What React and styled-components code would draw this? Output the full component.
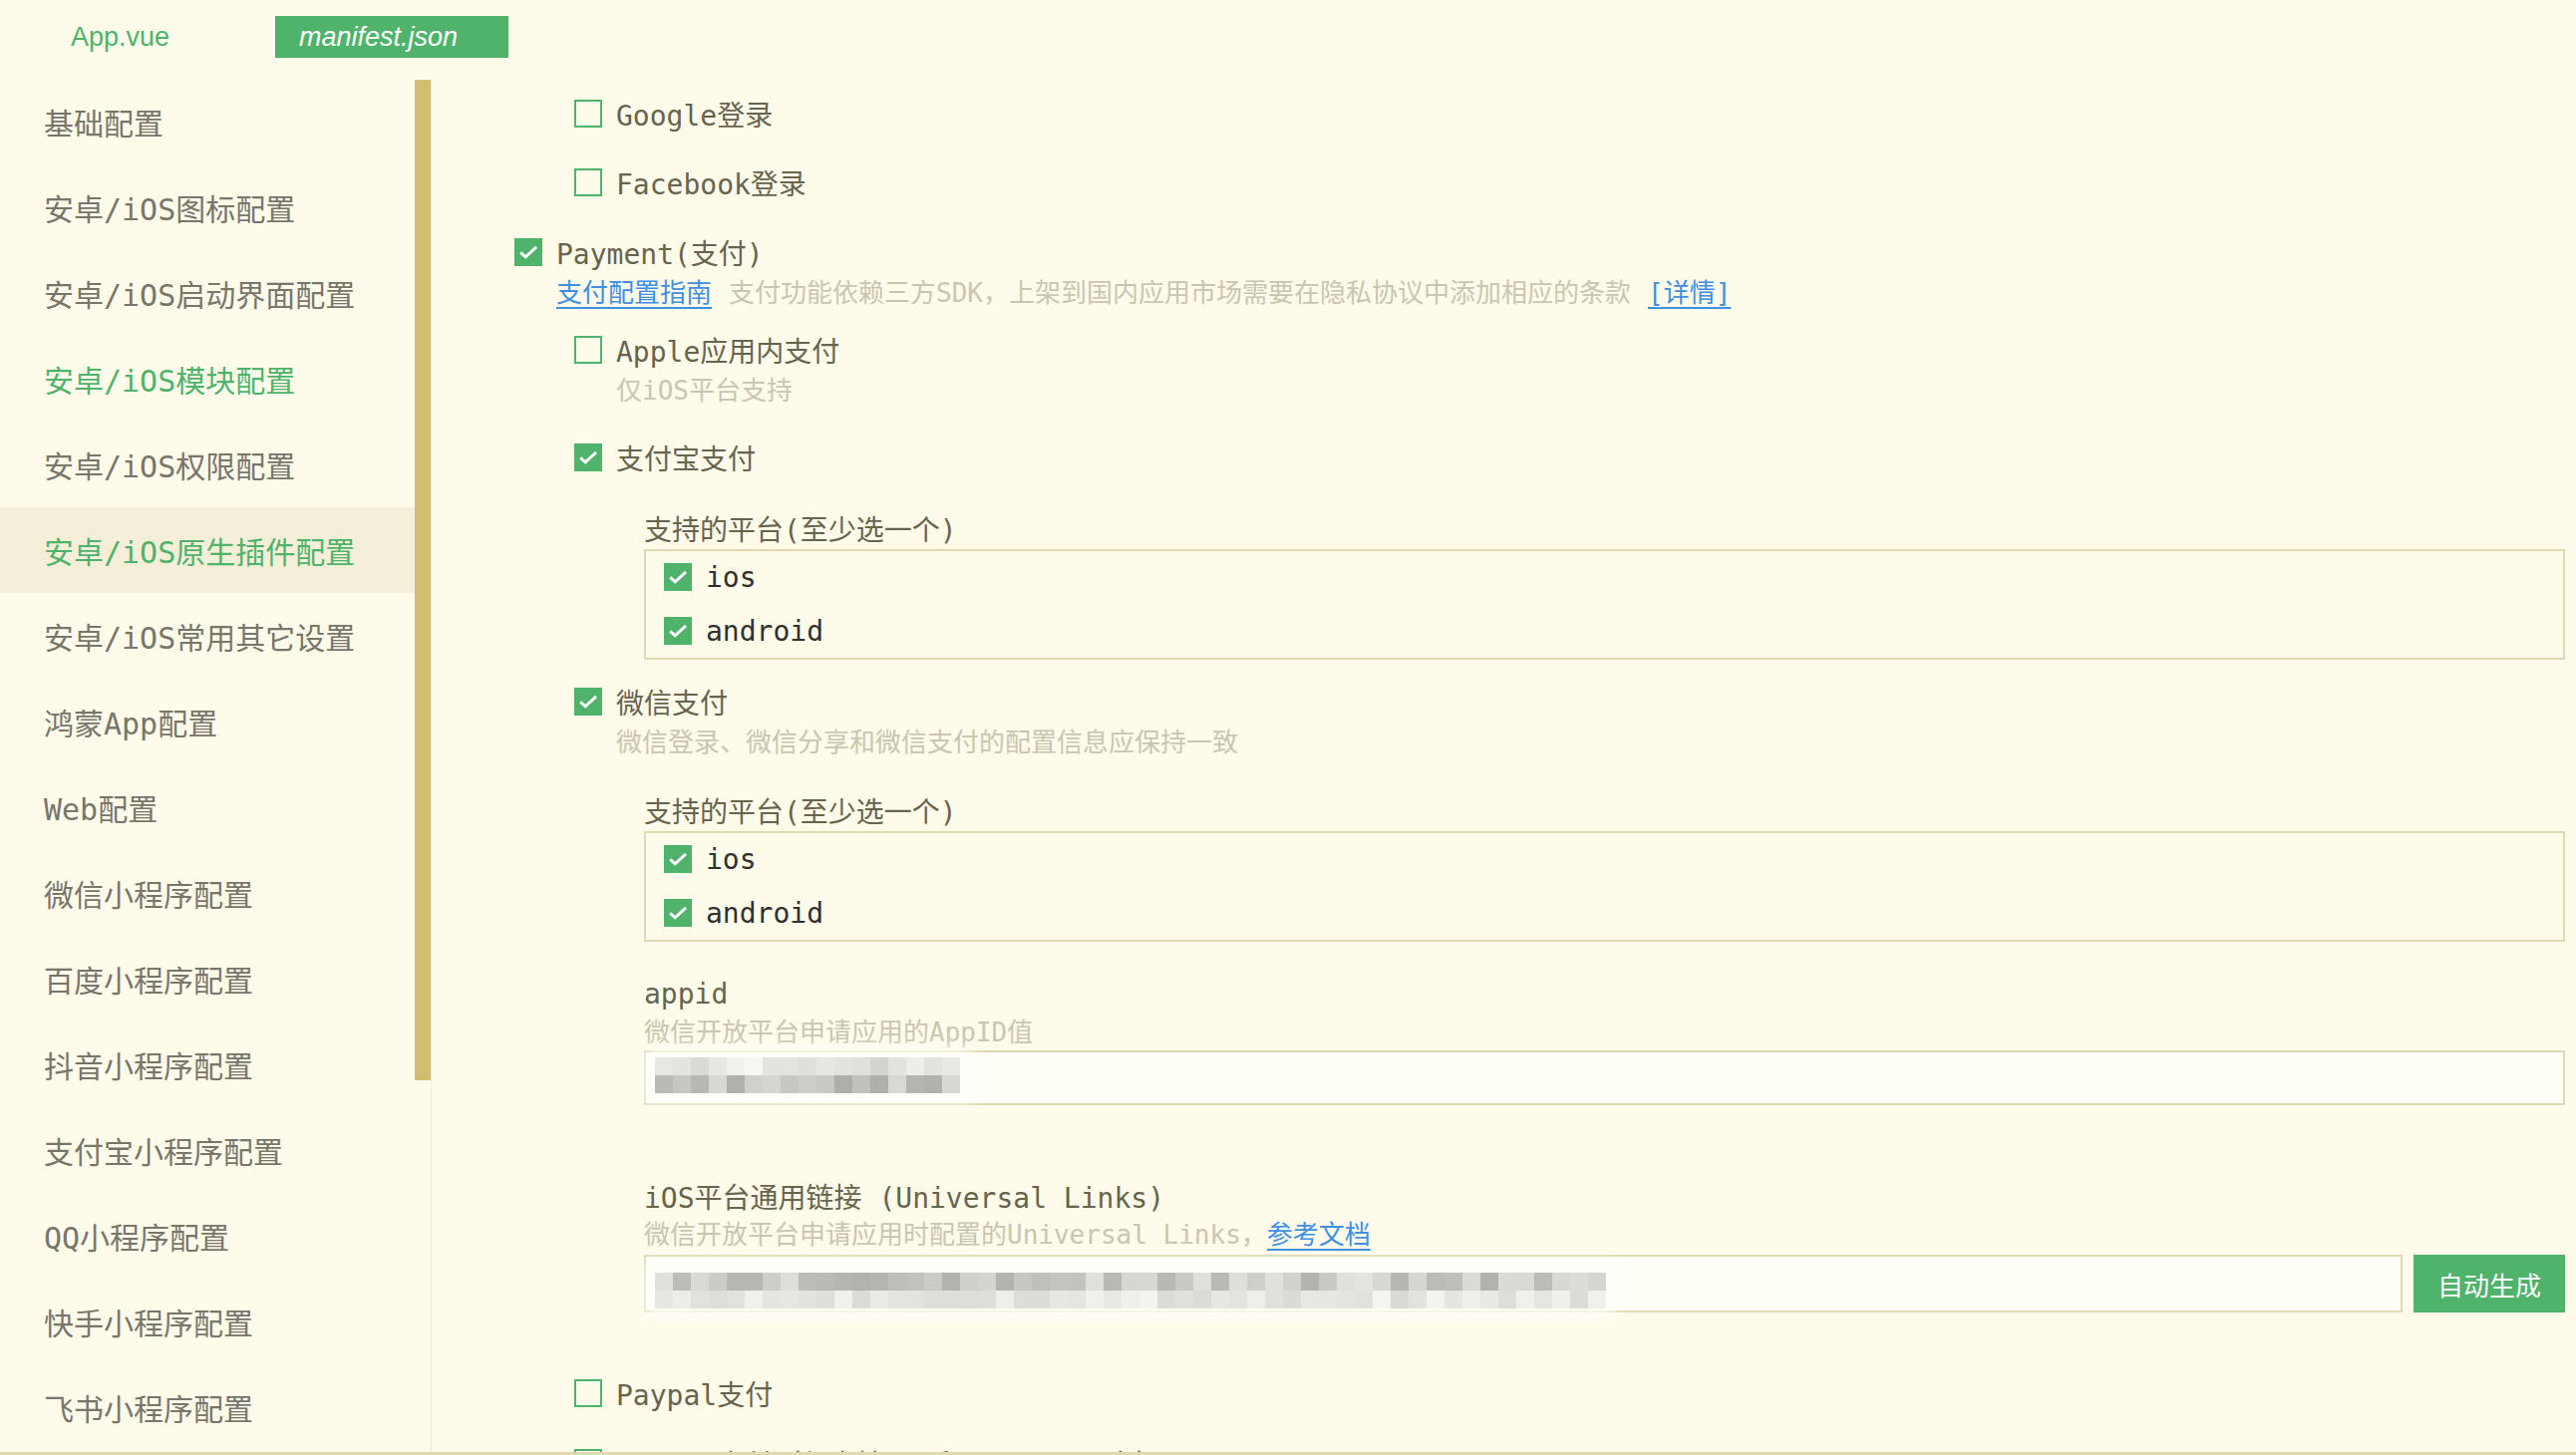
import React from "react";
import styled, { createGlobalStyle } from "styled-components";

const C = {
  bg: "#fefbea",
  navSelectedBg: "#f5efd9",
  green: "#4fb36b",
  thumb: "#d1be70",
  label: "#67634d",
  navText: "#78756a",
  strong: "#30302c",
  hint: "#c9c5b1",
  link: "#3f8fe2",
  border: "#e1d9b2",
  inputBg: "#fffef7",
  divider: "#f1ecd5",
};

const mono = `"DejaVu Sans Mono", "Noto Sans CJK SC", monospace`;
const sans = `"Liberation Sans", "Noto Sans CJK SC", sans-serif`;

const GlobalStyle = createGlobalStyle`
  html, body { margin: 0; padding: 0; background: ${C.bg}; }
  body { font-family: ${mono}; }
  * { box-sizing: border-box; }
`;

const Page = styled.div`
  height: 100vh;
  display: flex;
  flex-direction: column;
  overflow: hidden;
  background: ${C.bg};
`;

/* ---------- editor tabs ---------- */
const TabBar = styled.div`
  flex: none;
  height: 79px;
  display: flex;
  align-items: flex-start;
  padding: 16px 0 0 47px;
`;

const Tab = styled.div`
  width: ${(p) => p.$width}px;
  height: 42px;
  display: flex;
  align-items: center;
  padding-left: 24px;
  font-family: ${sans};
  font-size: 27px;
  font-style: ${(p) => (p.$active ? "italic" : "normal")};
  color: ${(p) => (p.$active ? "#ffffff" : C.green)};
  background: ${(p) => (p.$active ? C.green : "transparent")};
`;

/* ---------- body: nav + form ---------- */
const Body = styled.div`
  flex: 1;
  min-height: 0;
  display: flex;
  overflow: hidden;
  border-bottom: 3px solid ${C.border};
`;

const Sidebar = styled.aside`
  flex: none;
  display: flex;
  border-right: 1px solid ${C.divider};
`;

const NavList = styled.nav`
  width: 416px;
  display: flex;
  flex-direction: column;
  overflow: hidden;
`;

const NavItem = styled.div`
  flex: none;
  height: 86px;
  display: flex;
  align-items: center;
  padding-left: 44px;
  font-size: 30px;
  white-space: nowrap;
  color: ${(p) => (p.$highlight ? C.green : C.navText)};
  background: ${(p) => (p.$selected ? C.navSelectedBg : "transparent")};
`;

const ScrollTrack = styled.div`
  width: 16px;
  padding-top: 1px;
`;

const ScrollThumb = styled.div`
  width: 16px;
  background: ${C.thumb};
`;

const Content = styled.main`
  flex: 1;
  min-width: 0;
  display: flex;
  flex-direction: column;
  overflow: hidden;
  padding: 15px 11px 0 83px;
`;

/* ---------- checkbox options ---------- */
const Option = styled.div`
  flex: none;
  margin-top: ${(p) => p.$mt || 0}px;
  margin-left: ${(p) => p.$indent || 0}px;
`;

const CheckRow = styled.label`
  height: 40px;
  display: flex;
  align-items: center;
  gap: 14px;
  font-size: 28px;
  white-space: nowrap;
  color: ${(p) => (p.$strong ? C.strong : C.label)};
`;

const Box = styled.span`
  flex: none;
  width: 28px;
  height: 28px;
  display: flex;
  align-items: center;
  justify-content: center;
  border: 2px solid ${C.green};
  background: ${(p) => (p.$checked ? C.green : "transparent")};
`;

const Hint = styled.div`
  height: 36px;
  display: flex;
  align-items: center;
  gap: 17px;
  padding-left: ${(p) => p.$inset || 0}px;
  font-size: 26px;
  color: ${C.hint};
  white-space: nowrap;
`;

const Link = styled.a`
  color: ${C.link};
  text-decoration: underline;
  text-decoration-thickness: 2px;
  text-underline-offset: 5px;
  cursor: pointer;
`;

/* ---------- nested groups & fields ---------- */
const Group = styled.div`
  flex: none;
  margin-top: ${(p) => p.$mt || 0}px;
  margin-left: 130px;
`;

const FieldLabel = styled.div`
  height: 36px;
  display: flex;
  align-items: center;
  font-size: 28px;
  color: ${C.label};
  white-space: nowrap;
`;

const OptionBox = styled.div`
  margin-top: 3px;
  border: 2px solid ${C.border};
  padding: 6px 0 7px 18px;
  display: flex;
  flex-direction: column;
  gap: 14px;
`;

const InputRow = styled.div`
  margin-top: ${(p) => p.$mt || 0}px;
  height: ${(p) => p.$h}px;
  display: flex;
  gap: 11px;
`;

const InputBox = styled.div`
  flex: 1;
  min-width: 0;
  border: 2px solid ${C.border};
  background: ${C.inputBg};
  padding: ${(p) => p.$padTop}px 0 0 9px;
`;

const ActionButton = styled.button`
  flex: none;
  width: 152px;
  border: none;
  padding: 0;
  background: ${C.green};
  color: #ffffff;
  font-family: ${sans};
  font-size: 26px;
  cursor: pointer;
`;

/* masked value: a two-row pixel mosaic */
const Mosaic = styled.div`
  display: grid;
  grid-template-rows: repeat(2, 18px);
  grid-auto-flow: column;
  grid-auto-columns: 18px;
  width: max-content;
  box-shadow: 0 0 14px 10px rgba(255, 255, 252, 0.85);
  filter: blur(0.5px);
`;

const MosaicCell = styled.span`
  display: block;
`;

function shade(seed) {
  const x = Math.sin(seed * 12.9898) * 43758.5453;
  return x - Math.floor(x);
}

function MaskedValue({ cols, top, bottom, seed }) {
  const cells = [];
  for (let c = 0; c < cols; c++) {
    [top, bottom].forEach(([base, range], r) => {
      const v = Math.round(base + shade(seed + c * 2 + r) * range);
      cells.push(
        <MosaicCell
          key={`${c}-${r}`}
          style={{ background: `rgb(${v}, ${v}, ${v - 5})` }}
        />
      );
    });
  }
  return <Mosaic>{cells}</Mosaic>;
}

function CheckIcon() {
  return (
    <svg width="24" height="24" viewBox="0 0 24 24" fill="none">
      <path
        d="M4.2 12.3 L9.2 16.8 L20 6.8"
        stroke="#ffffff"
        strokeWidth="3"
        strokeLinecap="butt"
        strokeLinejoin="miter"
      />
    </svg>
  );
}

function Check({ checked, strong, children }) {
  return (
    <CheckRow $strong={strong}>
      <Box $checked={checked}>{checked && <CheckIcon />}</Box>
      <span>{children}</span>
    </CheckRow>
  );
}

function PlatformGroup({ mt }) {
  return (
    <Group $mt={mt}>
      <FieldLabel>支持的平台(至少选一个)</FieldLabel>
      <OptionBox>
        <Check checked strong>ios</Check>
        <Check checked strong>android</Check>
      </OptionBox>
    </Group>
  );
}

const navItems = [
  "基础配置",
  "安卓/iOS图标配置",
  "安卓/iOS启动界面配置",
  "安卓/iOS模块配置",
  "安卓/iOS权限配置",
  "安卓/iOS原生插件配置",
  "安卓/iOS常用其它设置",
  "鸿蒙App配置",
  "Web配置",
  "微信小程序配置",
  "百度小程序配置",
  "抖音小程序配置",
  "支付宝小程序配置",
  "QQ小程序配置",
  "快手小程序配置",
  "飞书小程序配置",
];

const NAV_TOTAL_ITEMS = 22;
const NAV_ITEM_H = 86;
const TRACK_H = 1378;

export default function App() {
  const thumbH = Math.round((TRACK_H / (NAV_TOTAL_ITEMS * NAV_ITEM_H)) * TRACK_H);

  return (
    <>
      <GlobalStyle />
      <Page>
        <TabBar>
          <Tab $width={229}>App.vue</Tab>
          <Tab $width={234} $active>
            manifest.json
          </Tab>
        </TabBar>

        <Body>
          <Sidebar>
            <NavList>
              {navItems.map((name, i) => (
                <NavItem key={name} $highlight={i === 3 || i === 5} $selected={i === 5}>
                  {name}
                </NavItem>
              ))}
            </NavList>
            <ScrollTrack>
              <ScrollThumb style={{ height: thumbH }} />
            </ScrollTrack>
          </Sidebar>

          <Content>
            <Option $indent={60}>
              <Check>Google登录</Check>
            </Option>
            <Option $indent={60} $mt={29}>
              <Check>Facebook登录</Check>
            </Option>

            <Option $mt={30}>
              <Check checked>Payment(支付)</Check>
              <Hint $inset={42}>
                <Link>支付配置指南</Link>
                <span>支付功能依赖三方SDK，上架到国内应用市场需要在隐私协议中添加相应的条款</span>
                <Link>[详情]</Link>
              </Hint>
            </Option>

            <Option $indent={60} $mt={22}>
              <Check>Apple应用内支付</Check>
              <Hint $inset={42}>仅iOS平台支持</Hint>
            </Option>

            <Option $indent={60} $mt={32}>
              <Check checked>支付宝支付</Check>
            </Option>
            <PlatformGroup mt={33} />

            <Option $indent={60} $mt={22}>
              <Check checked>微信支付</Check>
              <Hint $inset={42}>微信登录、微信分享和微信支付的配置信息应保持一致</Hint>
            </Option>
            <PlatformGroup mt={35} />

            <Group $mt={34}>
              <FieldLabel>appid</FieldLabel>
              <Hint>微信开放平台申请应用的AppID值</Hint>
              <InputRow $mt={3} $h={55}>
                <InputBox $padTop={5}>
                  <MaskedValue cols={17} top={[212, 36]} bottom={[168, 50]} seed={3} />
                </InputBox>
              </InputRow>
            </Group>

            <Group $mt={73}>
              <FieldLabel>iOS平台通用链接 (Universal Links)</FieldLabel>
              <Hint>
                <span>
                  微信开放平台申请应用时配置的Universal Links，<Link>参考文档</Link>
                </span>
              </Hint>
              <InputRow $mt={5} $h={58}>
                <InputBox $padTop={16}>
                  <MaskedValue cols={53} top={[178, 50]} bottom={[218, 28]} seed={41} />
                </InputBox>
                <ActionButton>自动生成</ActionButton>
              </InputRow>
            </Group>

            <Option $indent={60} $mt={61}>
              <Check>Paypal支付</Check>
            </Option>
            <Option $indent={60} $mt={30}>
              <Check>Stripe支付（仅支持iOS和Android平台）</Check>
            </Option>
          </Content>
        </Body>
      </Page>
    </>
  );
}
